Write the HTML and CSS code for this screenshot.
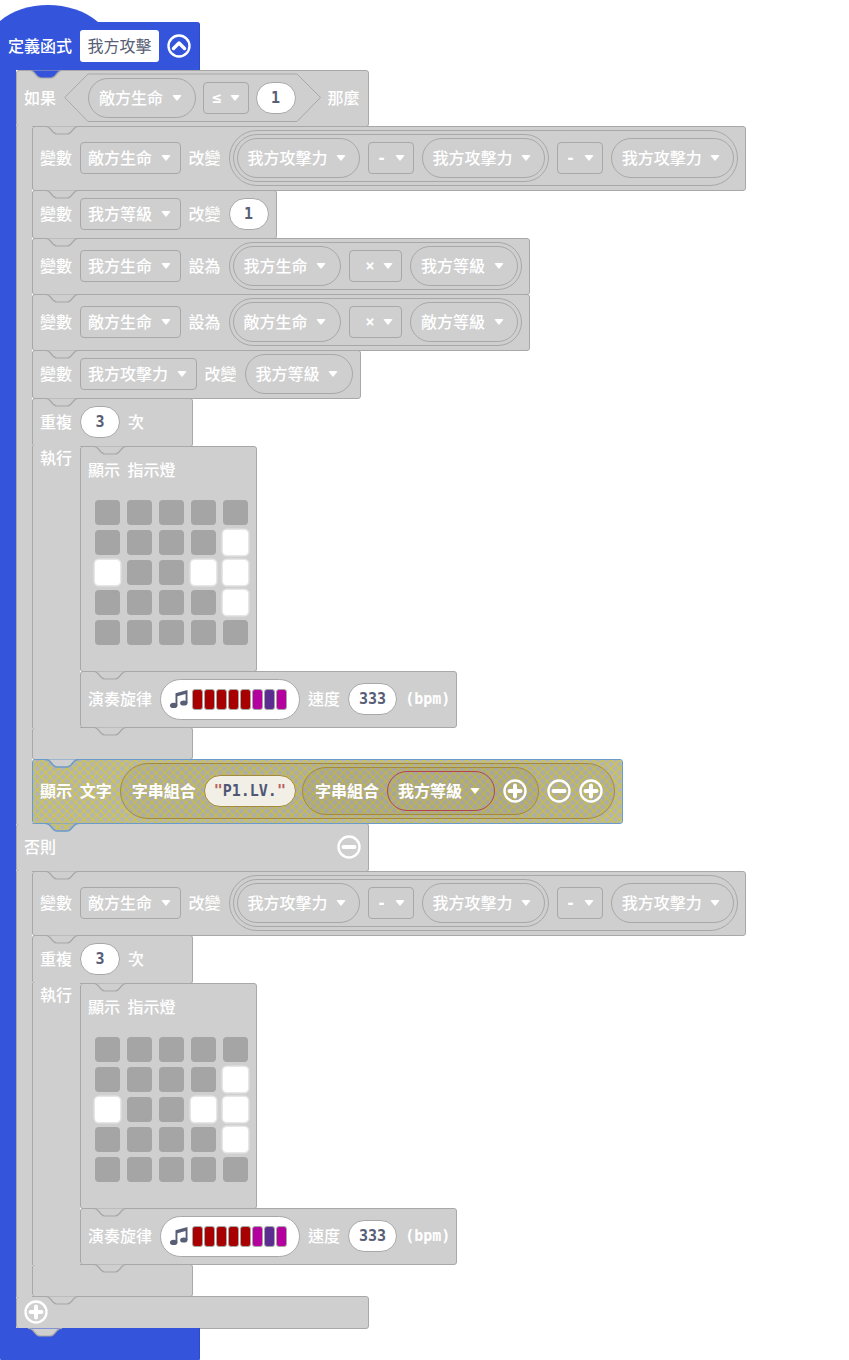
FILE: index.html
```html
<!DOCTYPE html>
<html lang="zh-Hant">
<head>
    <meta charset="UTF-8">
    <title>定義函式 我方攻擊</title>
    <link rel="stylesheet" href="styles.css">
</head>
<body>
    <!-- shared shapes -->
    <svg class="defs" width="0" height="0">
        <defs>
            <pattern id="hatch" width="8.5" height="8.5" patternUnits="userSpaceOnUse">
                <rect width="8.5" height="8.5" fill="#b4b4b4"/>
                <path d="M0 0L8.5 8.5M8.5 0L0 8.5" stroke="#d6cb28" stroke-width="1"/>
            </pattern>
            <symbol id="tab" viewBox="0 0 34 9">
                <path d="M0 .5H1C3 .5 4 1.5 5 2.5L8 6C9 7 10 8 12 8H22C24 8 25 7 26 6L29 2.5C30 1.5 31 .5 33 .5H34"/>
            </symbol>
            <symbol id="btn-plus" viewBox="0 0 24 24">
                <circle cx="12" cy="12" r="10.5" fill="none" stroke="#fff" stroke-width="2.4"/>
                <path d="M6.5 12H17.5M12 6.5V17.5" stroke="#fff" stroke-width="4" stroke-linecap="round"/>
            </symbol>
            <symbol id="btn-minus" viewBox="0 0 24 24">
                <circle cx="12" cy="12" r="10.5" fill="none" stroke="#fff" stroke-width="2.4"/>
                <path d="M6.5 12H17.5" stroke="#fff" stroke-width="4" stroke-linecap="round"/>
            </symbol>
            <symbol id="btn-up" viewBox="0 0 24 24">
                <circle cx="12" cy="12" r="10.5" fill="none" stroke="#fff" stroke-width="2.4"/>
                <path d="M6.5 14.5L12 9L17.5 14.5" fill="none" stroke="#fff" stroke-width="3.4" stroke-linecap="round" stroke-linejoin="round"/>
            </symbol>
            <symbol id="note" viewBox="0 0 18 18">
                <path d="M5.5 3.2L17.5 0V13H15.6V4L7.4 6.2V15.5H5.5Z"/>
                <ellipse cx="3.7" cy="15.4" rx="3.7" ry="2.6"/>
                <ellipse cx="13.8" cy="13" rx="3.7" ry="2.6"/>
            </symbol>
        </defs>
    </svg>

    <div class="canvas">
        <svg class="hat" width="100" height="23" viewBox="0 0 100 23"><path d="M0 23V21C25 -.5 72 -.5 98 22V23Z"/></svg>

        <div class="func">
            <div class="func-head">
                <span class="lbl">定義函式</span>
                <span class="name-input">我方攻擊</span>
                <svg class="btn"><use href="#btn-up"/></svg>
            </div>
            <div class="wrap func-wrap">
                <div class="strip strip-blue"></div>
                <div class="stack">

                    <!-- 如果 -->
                    <div class="stmt if-head">
                        <svg class="tab tab-blue"><use href="#tab"/></svg>
                        <span class="lbl">如果</span>
                        <div class="hex">
                            <svg class="hex-bg" width="258" height="50" viewBox="0 0 258 50"><path d="M.7 24.5L24 1H233L256.5 24.5L233 48.5H24Z"/></svg>
                            <span class="pill">敵方生命<i class="tri"></i></span>
                            <span class="field mono">≤<i class="tri"></i></span>
                            <span class="num">1</span>
                        </div>
                        <span class="lbl">那麼</span>
                    </div>
                    <div class="wrap">
                        <div class="strip strip-if"></div>
                        <div class="stack">
                            <div class="stmt">
                                <svg class="tab"><use href="#tab"/></svg>
                                <span class="lbl">變數</span>
                                <span class="field">敵方生命<i class="tri"></i></span>
                                <span class="lbl">改變</span>
                                <div class="math">
                                    <div class="math">
                                        <span class="pill">我方攻擊力<i class="tri"></i></span>
                                        <span class="field mono">-<i class="tri"></i></span>
                                        <span class="pill">我方攻擊力<i class="tri"></i></span>
                                    </div>
                                    <span class="field mono">-<i class="tri"></i></span>
                                    <span class="pill">我方攻擊力<i class="tri"></i></span>
                                </div>
                            </div>
                            <div class="stmt">
                                <svg class="tab"><use href="#tab"/></svg>
                                <span class="lbl">變數</span>
                                <span class="field">我方等級<i class="tri"></i></span>
                                <span class="lbl">改變</span>
                                <span class="num">1</span>
                            </div>
                            <div class="stmt">
                                <svg class="tab"><use href="#tab"/></svg>
                                <span class="lbl">變數</span>
                                <span class="field">我方生命<i class="tri"></i></span>
                                <span class="lbl">設為</span>
                                <div class="math">
                                    <span class="pill">我方生命<i class="tri"></i></span>
                                    <span class="field mono times">×<i class="tri"></i></span>
                                    <span class="pill">我方等級<i class="tri"></i></span>
                                </div>
                            </div>
                            <div class="stmt">
                                <svg class="tab"><use href="#tab"/></svg>
                                <span class="lbl">變數</span>
                                <span class="field">敵方生命<i class="tri"></i></span>
                                <span class="lbl">設為</span>
                                <div class="math">
                                    <span class="pill">敵方生命<i class="tri"></i></span>
                                    <span class="field mono times">×<i class="tri"></i></span>
                                    <span class="pill">敵方等級<i class="tri"></i></span>
                                </div>
                            </div>
                            <div class="stmt">
                                <svg class="tab"><use href="#tab"/></svg>
                                <span class="lbl">變數</span>
                                <span class="field">我方攻擊力<i class="tri"></i></span>
                                <span class="lbl">改變</span>
                                <span class="pill">我方等級<i class="tri"></i></span>
                            </div>

                            <!-- 重複 3 次 -->
                            <div class="stmt loop-head">
                                <svg class="tab"><use href="#tab"/></svg>
                                <span class="lbl">重複</span>
                                <span class="num">3</span>
                                <span class="lbl">次</span>
                            </div>
                            <div class="wrap">
                                <div class="strip strip-loop"><span class="lbl">執行</span></div>
                                <div class="stack">
                                    <div class="stmt leds">
                                        <svg class="tab"><use href="#tab"/></svg>
                                        <span class="lbl">顯示 指示燈</span>
                                        <div class="led-grid">
                                            <i class="led"></i><i class="led"></i><i class="led"></i><i class="led"></i><i class="led"></i>
                                            <i class="led"></i><i class="led"></i><i class="led"></i><i class="led"></i><i class="led on"></i>
                                            <i class="led on"></i><i class="led"></i><i class="led"></i><i class="led on"></i><i class="led on"></i>
                                            <i class="led"></i><i class="led"></i><i class="led"></i><i class="led"></i><i class="led on"></i>
                                            <i class="led"></i><i class="led"></i><i class="led"></i><i class="led"></i><i class="led"></i>
                                        </div>
                                    </div>
                                    <div class="stmt play">
                                        <svg class="tab"><use href="#tab"/></svg>
                                        <span class="lbl">演奏旋律</span>
                                        <div class="melody">
                                            <svg class="note"><use href="#note"/></svg>
                                            <i class="bar red"></i><i class="bar red"></i><i class="bar red"></i><i class="bar red"></i><i class="bar red"></i><i class="bar pink"></i><i class="bar violet"></i><i class="bar pink"></i>
                                        </div>
                                        <span class="lbl">速度</span>
                                        <span class="num">333</span>
                                        <span class="unit">(bpm)</span>
                                    </div>
                                </div>
                            </div>
                            <div class="stmt loop-foot">
                                <svg class="tab tab-inner"><use href="#tab"/></svg>
                            </div>

                            <!-- selected block -->
                            <div class="stmt lit">
                                <svg class="lit-bg" width="100%" height="100%"><rect width="100%" height="100%" fill="url(#hatch)"/></svg>
                                <svg class="tab tab-lit"><use href="#tab"/></svg>
                                <span class="lbl">顯示 文字</span>
                                <div class="join join-outer">
                                    <span class="lbl">字串組合</span>
                                    <span class="str"><b>"</b>P1.LV.<b>"</b></span>
                                    <div class="join join-inner">
                                        <span class="lbl">字串組合</span>
                                        <span class="pill pill-red">我方等級<i class="tri"></i></span>
                                        <svg class="btn"><use href="#btn-plus"/></svg>
                                    </div>
                                    <svg class="btn"><use href="#btn-minus"/></svg>
                                    <svg class="btn"><use href="#btn-plus"/></svg>
                                </div>
                                <svg class="tab tab-below" fill="url(#hatch)"><use href="#tab"/></svg>
                            </div>
                        </div>
                    </div>

                    <!-- 否則 -->
                    <div class="stmt else-head">
                        <span class="lbl">否則</span>
                        <svg class="btn"><use href="#btn-minus"/></svg>
                    </div>
                    <div class="wrap">
                        <div class="strip strip-if"></div>
                        <div class="stack">
                            <div class="stmt">
                                <svg class="tab"><use href="#tab"/></svg>
                                <span class="lbl">變數</span>
                                <span class="field">敵方生命<i class="tri"></i></span>
                                <span class="lbl">改變</span>
                                <div class="math">
                                    <div class="math">
                                        <span class="pill">我方攻擊力<i class="tri"></i></span>
                                        <span class="field mono">-<i class="tri"></i></span>
                                        <span class="pill">我方攻擊力<i class="tri"></i></span>
                                    </div>
                                    <span class="field mono">-<i class="tri"></i></span>
                                    <span class="pill">我方攻擊力<i class="tri"></i></span>
                                </div>
                            </div>
                            <div class="stmt loop-head">
                                <svg class="tab"><use href="#tab"/></svg>
                                <span class="lbl">重複</span>
                                <span class="num">3</span>
                                <span class="lbl">次</span>
                            </div>
                            <div class="wrap">
                                <div class="strip strip-loop"><span class="lbl">執行</span></div>
                                <div class="stack">
                                    <div class="stmt leds">
                                        <svg class="tab"><use href="#tab"/></svg>
                                        <span class="lbl">顯示 指示燈</span>
                                        <div class="led-grid">
                                            <i class="led"></i><i class="led"></i><i class="led"></i><i class="led"></i><i class="led"></i>
                                            <i class="led"></i><i class="led"></i><i class="led"></i><i class="led"></i><i class="led on"></i>
                                            <i class="led on"></i><i class="led"></i><i class="led"></i><i class="led on"></i><i class="led on"></i>
                                            <i class="led"></i><i class="led"></i><i class="led"></i><i class="led"></i><i class="led on"></i>
                                            <i class="led"></i><i class="led"></i><i class="led"></i><i class="led"></i><i class="led"></i>
                                        </div>
                                    </div>
                                    <div class="stmt play">
                                        <svg class="tab"><use href="#tab"/></svg>
                                        <span class="lbl">演奏旋律</span>
                                        <div class="melody">
                                            <svg class="note"><use href="#note"/></svg>
                                            <i class="bar red"></i><i class="bar red"></i><i class="bar red"></i><i class="bar red"></i><i class="bar red"></i><i class="bar pink"></i><i class="bar violet"></i><i class="bar pink"></i>
                                        </div>
                                        <span class="lbl">速度</span>
                                        <span class="num">333</span>
                                        <span class="unit">(bpm)</span>
                                    </div>
                                </div>
                            </div>
                            <div class="stmt loop-foot">
                                <svg class="tab tab-inner"><use href="#tab"/></svg>
                            </div>
                        </div>
                    </div>
                    <div class="stmt if-foot">
                        <svg class="tab tab-if"><use href="#tab"/></svg>
                        <svg class="btn"><use href="#btn-plus"/></svg>
                    </div>
                </div>
            </div>
            <div class="func-foot">
                <svg class="tab tab-func"><use href="#tab"/></svg>
            </div>
        </div>
    </div>
</body>
</html>
```

FILE: styles.css
```css
/* page */
body {
    margin: 0;
    background: #fff;
    font-family: "Noto Sans CJK TC", "Noto Sans", sans-serif;
    font-size: 16px;
    font-weight: 500;
    color: #fff;
}

.defs {
    position: absolute;
}

.canvas {
    position: relative;
    width: fit-content;
    padding-top: 22px;
}

.hat {
    position: absolute;
    top: 0;
    left: 0;
    fill: #3455db;
}

/* function block */
.func-head {
    display: flex;
    align-items: center;
    gap: 8px;
    box-sizing: border-box;
    width: 200px;
    height: 48px;
    padding: 0 8px;
    background: #3455db;
    border-right: 1px solid #2f4cc6;
    border-radius: 0 3px 0 0;
}

.name-input {
    display: flex;
    align-items: center;
    justify-content: center;
    box-sizing: border-box;
    width: 80px;
    height: 32px;
    padding-bottom: 2px;
    background: #fff;
    color: #575e75;
    font-weight: 400;
    border-radius: 3px;
}

.func-foot {
    position: relative;
    box-sizing: border-box;
    width: 200px;
    height: 33px;
    margin-top: -1px;
    background: #3455db;
    border-right: 1px solid #2f4cc6;
    border-radius: 0 0 3px 3px;
}

/* C shaped blocks: a side strip next to a stack of statements */
.wrap {
    display: flex;
    margin-top: -1px;
}

.func-wrap {
    margin-top: 0;
}

.strip {
    position: relative;
    z-index: 1;
    flex: none;
    box-sizing: border-box;
}

.strip-blue {
    width: 16px;
    background: #3455db;
}

.strip-if {
    width: 16px;
    background: #cfcfcf;
    border-left: 1px solid #a8a8a8;
}

.strip-loop {
    width: 48px;
    padding: 0 0 0 7px;
    background: #cfcfcf;
    border-left: 1px solid #a8a8a8;
}

.strip-loop .lbl {
    display: block;
    line-height: 22px;
}

.stack {
    display: flex;
    flex-direction: column;
}

/* statement block */
.stmt {
    position: relative;
    display: flex;
    align-items: center;
    gap: 8px;
    box-sizing: border-box;
    width: fit-content;
    min-height: 49px;
    padding: 3px 7px 4px;
    background: #cfcfcf;
    border: 1px solid #a8a8a8;
    border-radius: 3px;
}

.stmt + .stmt,
.wrap + .stmt {
    margin-top: -1px;
}

.lbl {
    flex: none;
    padding-bottom: 2px;
    line-height: 24px;
    white-space: pre;
    word-spacing: 4px;
}

.if-head {
    width: 353px;
    height: 57px;
}

.else-head {
    justify-content: space-between;
    width: 353px;
}

.play {
    height: 57px;
    padding-right: 6px;
}

.loop-head {
    width: 161px;
}

.loop-foot {
    width: 161px;
    height: 33px;
    min-height: 0;
}

.if-foot {
    width: 353px;
    height: 33px;
    min-height: 0;
    padding-left: 7px;
}

/* notch between two statements */
.tab {
    position: absolute;
    top: -1px;
    left: 12px;
    width: 34px;
    height: 9px;
    fill: #cfcfcf;
    stroke: #a8a8a8;
    stroke-width: 1.2;
}

.tab-blue {
    left: 12px;
    fill: #3455db;
}

.tab-inner {
    left: 60px;
}

.tab-if {
    left: 28px;
}

.tab-func {
    top: 0;
    left: 28px;
}

.tab-lit {
    stroke: #6b9bcb;
    stroke-width: 1.6;
}

.tab-below {
    top: auto;
    bottom: -9px;
    fill: url(#hatch);
    stroke: #6b9bcb;
    stroke-width: 1.6;
}

/* inputs */
.field,
.pill,
.num {
    flex: none;
    display: flex;
    align-items: center;
    box-sizing: border-box;
}

.field {
    height: 32px;
    padding: 0 9px 2px 7px;
    border: 1px solid #a8a8a8;
    border-radius: 4px;
}

.pill {
    min-width: 108px;
    height: 40px;
    padding: 0 13px 2px 10px;
    border: 1px solid #a8a8a8;
    border-radius: 20px;
}

.num {
    justify-content: center;
    min-width: 40px;
    height: 32px;
    padding: 0 10px;
    background: #fff;
    color: #575e75;
    border: 1px solid #a8a8a8;
    border-radius: 16px;
    font-family: "DejaVu Sans Mono", monospace;
    font-size: 15px;
    font-weight: bold;
}

.mono {
    padding: 0 8px;
    font-family: "DejaVu Sans Mono", monospace;
    font-size: 15px;
    font-weight: bold;
}

.times {
    padding-left: 16px;
}

.tri {
    flex: none;
    width: 0;
    height: 0;
    margin: 2px 0 0 8.5px;
    border-left: 5.5px solid transparent;
    border-right: 5.5px solid transparent;
    border-top: 6px solid #fff;
    border-radius: 2px;
}

.mono .tri {
    margin-top: 0;
}

.math {
    flex: none;
    display: flex;
    align-items: center;
    gap: 8px;
    padding: 3px 3px;
    border: 1px solid #a8a8a8;
    border-radius: 28px;
}

.hex {
    position: relative;
    flex: none;
    display: flex;
    align-items: center;
    gap: 7px;
    height: 48px;
    padding: 0 24px;
}

.hex-bg {
    position: absolute;
    top: -1px;
    left: 0;
    fill: none;
    stroke: #a8a8a8;
}

.hex > span {
    position: relative;
}

.btn {
    flex: none;
    width: 24px;
    height: 24px;
}

.unit {
    font-family: "DejaVu Sans Mono", monospace;
    font-size: 15px;
    font-weight: bold;
    color: #fff;
}

/* show leds */
.leds {
    display: block;
    width: 177px;
    height: 226px;
    padding-top: 10px;
}

.led-grid {
    display: grid;
    grid-template-columns: repeat(5, 25px);
    grid-auto-rows: 25px;
    column-gap: 7px;
    row-gap: 5px;
    margin: 19px 0 0 7px;
}

.led {
    background: #a5a5a5;
    border-radius: 4px;
}

.led.on {
    background: #fff;
    box-shadow: 0 0 0 1.5px #e6e6e6;
}

/* melody */
.melody {
    flex: none;
    display: flex;
    align-items: center;
    gap: 1px;
    box-sizing: border-box;
    width: 140px;
    height: 41px;
    padding-left: 9px;
    background: #fff;
    border: 1px solid #a8a8a8;
    border-radius: 21px;
}

.note {
    flex: none;
    width: 18px;
    height: 18px;
    margin-right: 3px;
    fill: #575e75;
}

.bar {
    flex: none;
    width: 11px;
    height: 21px;
    box-sizing: border-box;
    border: 1px solid #a7a7a7;
    border-radius: 3px;
}

.red { background: #a80000; }
.pink { background: #b4009e; }
.violet { background: #5c2d91; }

/* selected block */
.lit {
    z-index: 1;
    height: 65px;
    border-color: #6b9bcb;
    font-weight: 700;
}

.lit-bg {
    position: absolute;
    top: 0;
    left: 0;
    border-radius: 3px;
}

.lit > .lbl,
.lit > .join {
    position: relative;
}

.join {
    flex: none;
    display: flex;
    align-items: center;
    gap: 8px;
    box-sizing: border-box;
    background: rgba(100, 85, 60, 0.08);
    border: 1px solid #a58a3c;
    border-radius: 28px;
}

.join-outer {
    height: 56px;
    padding: 0 11px;
}

.join-inner {
    height: 48px;
    margin-left: -2px;
    padding: 0 11px 0 12px;
}

.str {
    display: flex;
    align-items: center;
    box-sizing: border-box;
    height: 32px;
    padding: 0 9px;
    background: #f1efe6;
    color: #4f5775;
    border: 1px solid #a58a3c;
    border-radius: 16px;
    font-family: "DejaVu Sans Mono", monospace;
    font-size: 15px;
    font-weight: bold;
}

.str b {
    color: #b9605c;
}

.pill-red {
    border-color: #b5424c;
}
```
